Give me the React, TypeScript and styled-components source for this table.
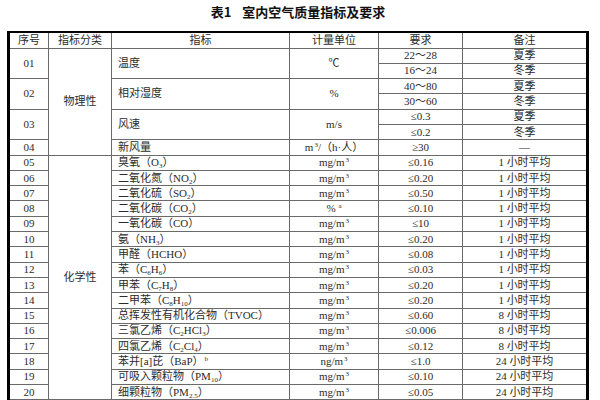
import styled, { createGlobalStyle } from "styled-components";

const GlobalStyle = createGlobalStyle`
  html, body {
    margin: 0;
    padding: 0;
    background: #ffffff;
    overflow: hidden;
  }
  body {
    font-family: "Liberation Serif", "Noto Sans CJK SC", serif;
    color: #2b2b2b;
  }
`;

export const Page = styled.div`
  width: 600px;
  height: 400px;
  overflow: hidden;
  padding: 0 11px 0 7px;
  box-sizing: border-box;
`;

export const Caption = styled.h1`
  margin: 0;
  height: 31px;
  display: flex;
  justify-content: center;
  align-items: center;
  gap: 11px;
  padding-bottom: 8px;
  box-sizing: border-box;
  font-family: "Noto Sans CJK SC", sans-serif;
  font-size: 13px;
  font-weight: 700;
  color: #111;
`;

export const Table = styled.table`
  width: 100%;
  border-collapse: collapse;
  table-layout: fixed;
  border-top: 2px solid #000;
  border-left: 3px solid #000;
  border-right: 3px solid #000;
`;

export const Row = styled.tr<{ $h?: number }>`
  height: ${(p) => p.$h ?? 15.3}px;
`;

export const Cell = styled.td<{ $left?: boolean }>`
  padding: ${(p) => (p.$left ? "0 0 0 6px" : "0")};
  border: 1px solid #6a6a6a;
  font-size: 11px;
  line-height: 1;
  text-align: ${(p) => (p.$left ? "left" : "center")};
  vertical-align: middle;
  white-space: nowrap;
  overflow: hidden;
`;

export const HeadCell = styled(Cell).attrs({ as: "th" })`
  font-weight: 400;
`;

export const Sub = styled.sub`
  font-size: 7px;
  line-height: 0;
  vertical-align: -2px;
`;

export const Sup = styled.sup`
  font-size: 7px;
  line-height: 0;
  vertical-align: 4px;
  margin-left: 1px;
`;

const M3 = () => (
  <>
    mg/m<Sup>3</Sup>
  </>
);

interface ChemRow {
  no: string;
  name: React.ReactNode;
  unit: React.ReactNode;
  limit: string;
  note: string;
}

const chemRows: ChemRow[] = [
  { no: "05", name: <>臭氧（O<Sub>3</Sub>）</>, unit: <M3 />, limit: "≤0.16", note: "1 小时平均" },
  { no: "06", name: <>二氧化氮（NO<Sub>2</Sub>）</>, unit: <M3 />, limit: "≤0.20", note: "1 小时平均" },
  { no: "07", name: <>二氧化硫（SO<Sub>2</Sub>）</>, unit: <M3 />, limit: "≤0.50", note: "1 小时平均" },
  { no: "08", name: <>二氧化碳（CO<Sub>2</Sub>）</>, unit: <>%<Sup> a</Sup></>, limit: "≤0.10", note: "1 小时平均" },
  { no: "09", name: <>一氧化碳（CO）</>, unit: <M3 />, limit: "≤10", note: "1 小时平均" },
  { no: "10", name: <>氨（NH<Sub>3</Sub>）</>, unit: <M3 />, limit: "≤0.20", note: "1 小时平均" },
  { no: "11", name: <>甲醛（HCHO）</>, unit: <M3 />, limit: "≤0.08", note: "1 小时平均" },
  { no: "12", name: <>苯（C<Sub>6</Sub>H<Sub>6</Sub>）</>, unit: <M3 />, limit: "≤0.03", note: "1 小时平均" },
  { no: "13", name: <>甲苯（C<Sub>7</Sub>H<Sub>8</Sub>）</>, unit: <M3 />, limit: "≤0.20", note: "1 小时平均" },
  { no: "14", name: <>二甲苯（C<Sub>8</Sub>H<Sub>10</Sub>）</>, unit: <M3 />, limit: "≤0.20", note: "1 小时平均" },
  { no: "15", name: <>总挥发性有机化合物（TVOC）</>, unit: <M3 />, limit: "≤0.60", note: "8 小时平均" },
  { no: "16", name: <>三氯乙烯（C<Sub>2</Sub>HCl<Sub>3</Sub>）</>, unit: <M3 />, limit: "≤0.006", note: "8 小时平均" },
  { no: "17", name: <>四氯乙烯（C<Sub>2</Sub>Cl<Sub>4</Sub>）</>, unit: <M3 />, limit: "≤0.12", note: "8 小时平均" },
  { no: "18", name: <>苯并[a]芘（BaP）<Sup>b</Sup></>, unit: <>ng/m<Sup>3</Sup></>, limit: "≤1.0", note: "24 小时平均" },
  { no: "19", name: <>可吸入颗粒物（PM<Sub>10</Sub>）</>, unit: <M3 />, limit: "≤0.10", note: "24 小时平均" },
  { no: "20", name: <>细颗粒物（PM<Sub>2.5</Sub>）</>, unit: <M3 />, limit: "≤0.05", note: "24 小时平均" },
];

interface PhysRow {
  no: string;
  name: string;
  unit: React.ReactNode;
  values: [string, string][];
}

const physRows: PhysRow[] = [
  { no: "01", name: "温度", unit: "℃", values: [["22～28", "夏季"], ["16～24", "冬季"]] },
  { no: "02", name: "相对湿度", unit: "%", values: [["40～80", "夏季"], ["30～60", "冬季"]] },
  { no: "03", name: "风速", unit: "m/s", values: [["≤0.3", "夏季"], ["≤0.2", "冬季"]] },
  { no: "04", name: "新风量", unit: <>m<Sup>3</Sup>/（h·人）</>, values: [["≥30", "—"]] },
];

export default function App() {
  return (
    <>
      <GlobalStyle />
      <Page>
        <Caption>
          <span>表1</span>
          <span>室内空气质量指标及要求</span>
        </Caption>
        <Table>
          <colgroup>
            <col style={{ width: 40 }} />
            <col style={{ width: 63 }} />
            <col style={{ width: 178 }} />
            <col style={{ width: 89 }} />
            <col style={{ width: 84 }} />
            <col />
          </colgroup>
          <thead>
            <Row $h={16}>
              <HeadCell>序号</HeadCell>
              <HeadCell>指标分类</HeadCell>
              <HeadCell>指标</HeadCell>
              <HeadCell>计量单位</HeadCell>
              <HeadCell>要求</HeadCell>
              <HeadCell>备注</HeadCell>
            </Row>
          </thead>
          <tbody>
            {physRows.map((r, i) =>
              r.values.map((v, j) => (
                <Row key={r.no + j}>
                  {j === 0 && (
                    <>
                      <Cell rowSpan={r.values.length}>{r.no}</Cell>
                      {i === 0 && <Cell rowSpan={7}>物理性</Cell>}
                      <Cell $left rowSpan={r.values.length}>
                        {r.name}
                      </Cell>
                      <Cell rowSpan={r.values.length}>{r.unit}</Cell>
                    </>
                  )}
                  <Cell>{v[0]}</Cell>
                  <Cell>{v[1]}</Cell>
                </Row>
              ))
            )}
            {chemRows.map((r, i) => (
              <Row key={r.no}>
                <Cell>{r.no}</Cell>
                {i === 0 && <Cell rowSpan={chemRows.length}>化学性</Cell>}
                <Cell $left>{r.name}</Cell>
                <Cell>{r.unit}</Cell>
                <Cell>{r.limit}</Cell>
                <Cell>{r.note}</Cell>
              </Row>
            ))}
          </tbody>
        </Table>
      </Page>
    </>
  );
}
